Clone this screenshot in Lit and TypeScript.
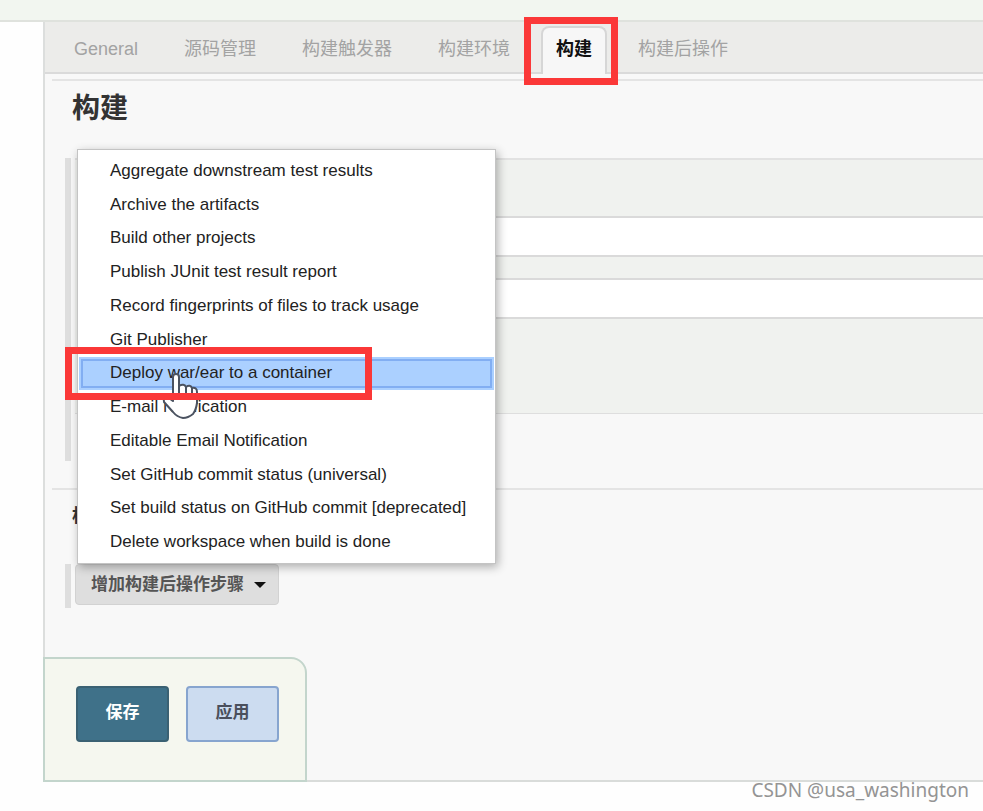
import { LitElement, html, css, nothing } from "lit";
import { customElement, property, state } from "lit/decorators.js";
import { classMap } from "lit/directives/class-map.js";

const TABS = ["General", "源码管理", "构建触发器", "构建环境", "构建", "构建后操作"];

const ACTIONS = [
  "Aggregate downstream test results",
  "Archive the artifacts",
  "Build other projects",
  "Publish JUnit test result report",
  "Record fingerprints of files to track usage",
  "Git Publisher",
  "Deploy war/ear to a container",
  "E-mail Notification",
  "Editable Email Notification",
  "Set GitHub commit status (universal)",
  "Set build status on GitHub commit [deprecated]",
  "Delete workspace when build is done",
];

@customElement("config-tabs")
class ConfigTabs extends LitElement {
  @state() private active = 4;

  static styles = css`
    :host {
      display: block;
    }
    .bar {
      display: flex;
      gap: 16px;
      height: 52px;
      box-sizing: border-box;
      padding: 4px 0 0 14px;
      background: #ececea;
      border-bottom: 2px solid #dadada;
    }
    .tab {
      position: relative;
      flex: none;
      height: 48px;
      box-sizing: border-box;
      margin: 0;
      padding: 0 13px 4px;
      border: 2px solid transparent;
      border-bottom: 0;
      border-radius: 8px 8px 0 0;
      background: none;
      color: #a3a3a3;
      font: 18px/24px "Liberation Sans", "Noto Sans CJK SC", sans-serif;
      white-space: nowrap;
    }
    .tab.active {
      background: #f7f7f7;
      border-color: #d6d6d6;
      color: #111;
      font-weight: bold;
    }
    .mark {
      position: absolute;
      inset: -11px -13px -11px -19px;
      border: 7px solid #fb3838;
      pointer-events: none;
    }
  `;

  render() {
    return html`<nav class="bar" role="tablist">
      ${TABS.map(
        (t, i) => html`<button
          class=${classMap({ tab: true, active: i === this.active })}
          role="tab"
          aria-selected=${i === this.active}
          @click=${() => (this.active = i)}
        >${t}${i === 4 ? html`<span class="mark"></span>` : nothing}</button>`
      )}
    </nav>`;
  }
}

@customElement("action-menu")
class ActionMenu extends LitElement {
  @property({ type: Number }) selected = 6;

  static styles = css`
    :host {
      display: block;
    }
    .menu {
      display: grid;
      grid-auto-rows: 1fr;
      height: 415px;
      box-sizing: border-box;
      padding: 4px 1px;
      border: 1px solid #c4c4c4;
      background: #fff;
      box-shadow: 2px 3px 9px rgba(0, 0, 0, 0.3);
    }
    .item {
      position: relative;
      display: flex;
      align-items: center;
      min-height: 0;
      margin: 0;
      padding: 0 0 0 31px;
      border: 0;
      background: none;
      color: #222;
      font: 17px/20px "Liberation Sans", Arial, sans-serif;
      text-align: left;
      white-space: nowrap;
    }
    .item.selected {
      background: #abd0ff;
      outline: 2px solid #82aef2;
      outline-offset: -4px;
    }
    .mark {
      position: absolute;
      z-index: 2;
      left: -14px;
      top: -10px;
      width: 307px;
      height: 53px;
      box-sizing: border-box;
      border: 7px solid #fb3838;
      pointer-events: none;
    }
    .hand {
      position: absolute;
      z-index: 1;
      left: 83px;
      top: 15px;
      width: 38px;
      height: 48px;
      pointer-events: none;
    }
  `;

  render() {
    return html`<div class="menu" role="menu">
      ${ACTIONS.map(
        (a, i) => html`<button
          class=${classMap({ item: true, selected: i === this.selected })}
          role="menuitem"
        >${a}${i === this.selected
          ? html`<svg class="hand" viewBox="0 0 38 48" aria-hidden="true">
                <path
                  d="M11 29V5Q11 2 14 2Q17 2 17 5V14Q22 11 24 15Q28 12 30 16Q35 15 35 20V31Q34 38 31 42Q26 46 21 46Q15 45 11 40L2 30Q1 26 5 26Q8 26 11 29Z"
                  fill="#fff" stroke="#4b5361" stroke-width="2" stroke-linejoin="round"
                />
                <path d="M17 14V24M24 15V24M30 16V24" fill="none" stroke="#4b5361" stroke-width="2" />
              </svg><span class="mark"></span>`
          : nothing}</button>`
      )}
    </div>`;
  }
}

@customElement("app-root")
class AppRoot extends LitElement {
  static styles = css`
    :host {
      position: relative;
      display: flex;
      flex-direction: column;
      min-height: 100vh;
      box-sizing: border-box;
      padding-bottom: 29px;
      overflow: hidden;
      background: #fefefe;
      color: #333;
      font: 17px/24px "Liberation Sans", "Noto Sans CJK SC", sans-serif;
    }
    .top {
      height: 20px;
      background: #f2f6f0;
      border-bottom: 2px solid #dfe2dd;
    }
    .panel {
      flex: 1;
      display: flex;
      flex-direction: column;
      margin-left: 43px;
      border-left: 2px solid #dcdedd;
      border-bottom: 2px solid #d9dcda;
      background: #f8f8f8;
    }
    .section {
      margin-left: 7px;
      padding-left: 13px;
      border-top: 2px solid #e4e4e4;
    }
    .build {
      margin-top: 5px;
    }
    .post {
      margin-top: 27px;
    }
    .title {
      margin: 0;
      padding: 10px 0 31px 7px;
      color: #333;
      font-size: 28px;
      line-height: 36px;
    }
    .subtitle {
      margin: 0;
      padding: 14px 0 36px 7px;
      font-size: 18px;
      line-height: 24px;
    }
    .block {
      position: relative;
      border-left: 6px solid #dedede;
      padding: 0 0 3px 4px;
    }
    .block.step {
      padding-bottom: 47px;
    }
    .fields {
      display: flex;
      flex-direction: column;
      gap: 21px;
      padding: 56px 0 94px 24px;
      background: #f0f2ef;
      border-top: 2px solid #e2e2e2;
      border-bottom: 1px solid #dedede;
    }
    .field {
      height: 41px;
      box-sizing: border-box;
      margin: 0;
      padding: 0 12px;
      border: 2px solid #dadada;
      border-right: 0;
      border-radius: 0;
      background: #fff;
      font: inherit;
    }
    .popup {
      position: absolute;
      z-index: 1;
      left: 6px;
      top: -9px;
      width: 419px;
    }
    .add {
      display: flex;
      align-items: center;
      gap: 10px;
      height: 41px;
      margin: 0;
      padding: 0 12px 0 15px;
      border: 1px solid #d2d2d2;
      border-radius: 4px;
      background: #dedede;
      color: #555;
      font: bold 17px/24px "Liberation Sans", "Noto Sans CJK SC", sans-serif;
    }
    .caret {
      border: 6px solid transparent;
      border-top-color: #111;
      border-bottom: 0;
    }
    .footer {
      display: flex;
      gap: 17px;
      align-self: flex-start;
      margin: auto 0 -2px -2px;
      padding: 27px 26px 38px 31px;
      border: 2px solid #c3d5cc;
      border-radius: 0 16px 0 0;
      background: #f5f7ef;
    }
    .btn {
      width: 93px;
      height: 56px;
      margin: 0;
      padding: 0 0 3px;
      border: 2px solid #87a5cf;
      border-radius: 4px;
      background: #ccdcf0;
      color: #4a4f5c;
      font: bold 17px/24px "Liberation Sans", "Noto Sans CJK SC", sans-serif;
    }
    .btn.primary {
      border-color: #3a6173;
      background: #3f7189;
      color: #fff;
    }
    .credit {
      position: absolute;
      right: 14px;
      bottom: 8px;
      color: #949494;
      font: 19px/26px "Noto Sans", sans-serif;
    }
  `;

  render() {
    return html`
      <header class="top"></header>
      <main class="panel">
        <config-tabs></config-tabs>
        <section class="section build">
          <h1 class="title">构建</h1>
          <div class="block step">
            <div class="fields">
              <input class="field" type="text" aria-label="Goals" />
              <input class="field" type="text" aria-label="POM" />
            </div>
            <action-menu class="popup"></action-menu>
          </div>
        </section>
        <section class="section post">
          <h2 class="subtitle">构</h2>
          <div class="block">
            <button class="add">增加构建后操作步骤<span class="caret"></span></button>
          </div>
        </section>
        <footer class="footer">
          <button class="btn primary">保存</button>
          <button class="btn">应用</button>
        </footer>
      </main>
      <div class="credit">CSDN @usa_washington</div>
    `;
  }
}
